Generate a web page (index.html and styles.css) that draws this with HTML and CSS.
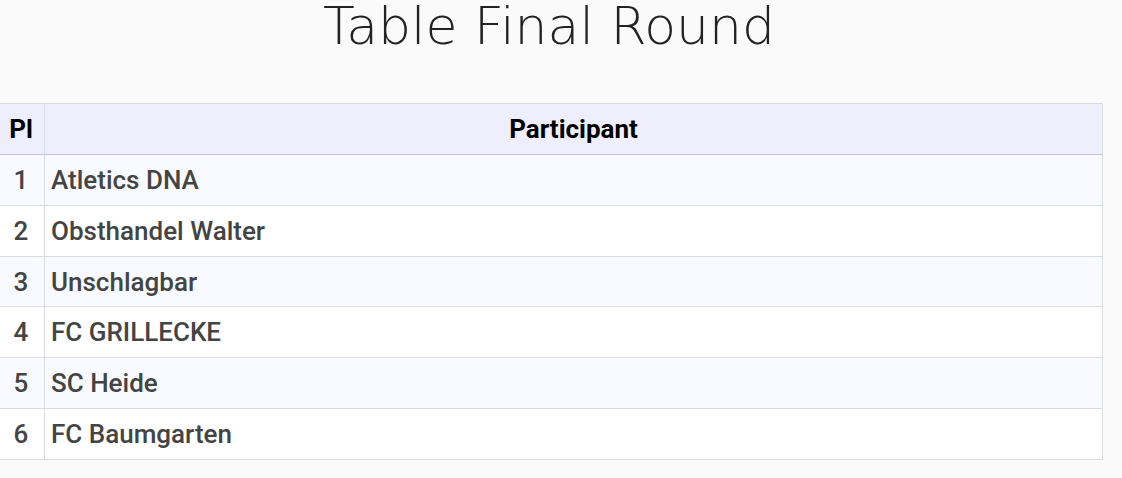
FILE: index.html
```html
<!DOCTYPE html>
<html>
<head>
<meta charset="utf-8">
<link rel="stylesheet" href="styles.css">
</head>
<body>
<div class="page">
  <h1 class="title">Table Final Round</h1>
  <div class="table-wrap">
    <table class="standings">
      <thead>
        <tr><th class="pl">Pl</th><th class="name">Participant</th></tr>
      </thead>
      <tbody>
        <tr><td class="pl">1</td><td class="name">Atletics DNA</td></tr>
        <tr><td class="pl">2</td><td class="name">Obsthandel Walter</td></tr>
        <tr><td class="pl">3</td><td class="name">Unschlagbar</td></tr>
        <tr><td class="pl">4</td><td class="name">FC GRILLECKE</td></tr>
        <tr><td class="pl">5</td><td class="name">SC Heide</td></tr>
        <tr><td class="pl">6</td><td class="name">FC Baumgarten</td></tr>
      </tbody>
    </table>
  </div>
</div>
</body>
</html>
```

FILE: styles.css
```css
html, body {
  margin: 0;
  padding: 0;
  background: #fafafa;
}
.page {
  width: 1122px;
  height: 478px;
  overflow: hidden;
}
.title {
  margin: 0;
  height: 103px;
  box-sizing: border-box;
  padding: 0 24px 0 0;
  text-align: center;
  font-family: "DejaVu Sans", sans-serif;
  font-weight: 200;
  font-size: 52px;
  line-height: 53px;
  color: #222;
}
.table-wrap {
  margin-left: -3px;
  width: 1106px;
}
.standings {
  width: 100%;
  border-collapse: collapse;
  font-family: Roboto, "Liberation Sans", sans-serif;
  font-size: 26px;
  border: 1px solid #dcdcdc;
}
.standings th {
  background: #efeefd;
  color: #000;
  font-weight: 700;
  height: 49.86px;
  padding: 0 6px;
  border-left: 1px solid #dcdbe8;
  border-bottom: 1px solid #c5c3d8;
  text-align: center;
}
.standings td {
  height: 49.86px;
  padding: 0 6px;
  color: #444444;
  font-weight: 500;
  border-left: 1px solid #dcdcdc;
  border-top: 1px solid #dcdcdc;
}
.standings td.pl,
.standings th.pl {
  text-align: center;
  width: 34px;
}
.standings td.name {
  text-align: left;
}
.standings tbody tr:nth-child(odd) td {
  background: #f9faff;
}
.standings tbody tr:nth-child(even) td {
  background: #ffffff;
}
```
